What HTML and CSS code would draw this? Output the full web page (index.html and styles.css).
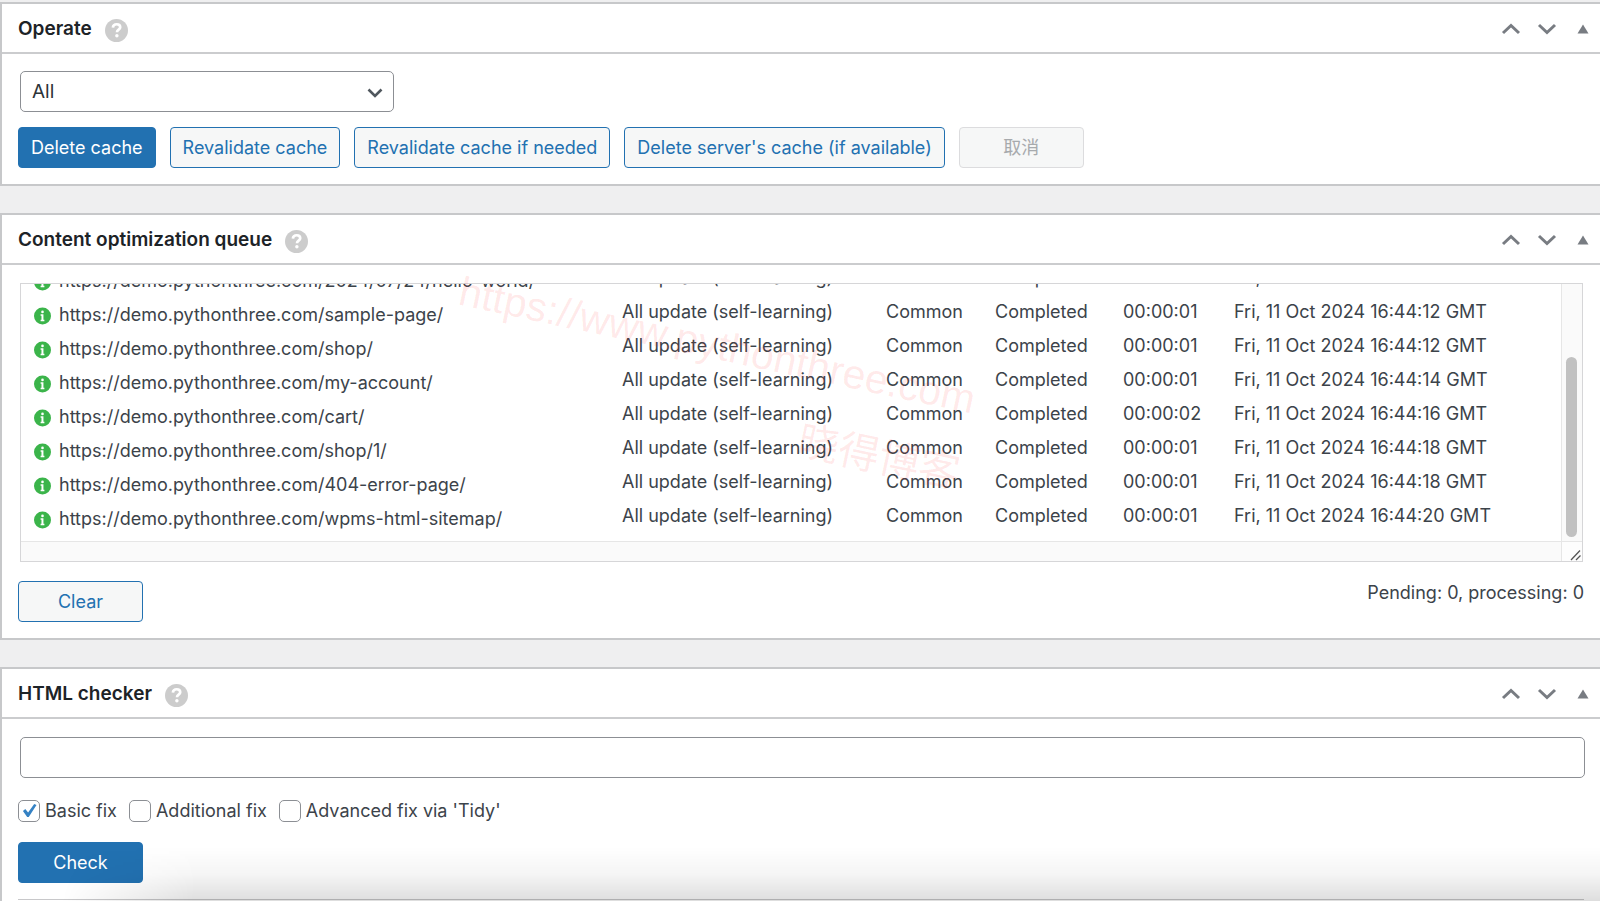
FILE: index.html
```html
<!DOCTYPE html>
<html lang="en">
<head>
<meta charset="utf-8">
<title>Cache settings</title>
<link rel="stylesheet" href="styles.css">
</head>
<body>
<svg class="sprite" aria-hidden="true">
  <symbol id="help" viewBox="0 0 24 24"><circle cx="12" cy="12" r="12" fill="#ccc"/><path d="M8.2 9c.2-2.200 1.700-3.500 4-3.500 2.200 0 3.700 1.200 3.700 3.100 0 2.500-3.400 2.600-3.400 5.200" fill="none" stroke="#fff" stroke-width="2.800"/><circle cx="12.400" cy="17.500" r="1.800" fill="#fff"/></symbol>
  <symbol id="up" viewBox="0 0 20 12"><path d="M2 10l8-7.500L18 10" fill="none" stroke="#787c82" stroke-width="3"/></symbol>
  <symbol id="down" viewBox="0 0 20 12"><path d="M2 2l8 7.500L18 2" fill="none" stroke="#787c82" stroke-width="3"/></symbol>
  <symbol id="tri" viewBox="0 0 12 10"><path d="M6 0.500L11.500 9.500H0.500z" fill="#787c82"/></symbol>
  <symbol id="info" viewBox="0 0 18 18"><circle cx="9" cy="9" r="9" fill="#3bb44a"/><circle cx="9" cy="4.700" r="1.400" fill="#fff"/><path d="M7 7.200h3v5.800h1v1.500H7v-1.500h.9V8.700H7z" fill="#fff"/></symbol>
</svg>

<main class="page">
  <section class="panel">
    <header class="panel-head">
      <h2>Operate</h2><svg class="help" role="img" aria-label="Help"><use href="#help"/></svg>
      <div class="tools">
        <button aria-label="Move up"><svg class="chev"><use href="#up"/></svg></button>
        <button aria-label="Move down"><svg class="chev"><use href="#down"/></svg></button>
        <button aria-label="Toggle panel"><svg class="tri"><use href="#tri"/></svg></button>
      </div>
    </header>
    <div class="panel-body">
      <div class="select-wrap">
        <select class="field" aria-label="Cache type"><option>All</option></select>
        <svg class="select-arrow" viewBox="0 0 16 10" aria-hidden="true"><path d="M1.500 1.500L8 8l6.500-6.500" fill="none" stroke="#50575e" stroke-width="2.600"/></svg>
      </div>
      <div class="buttons">
        <button class="btn primary">Delete cache</button>
        <button class="btn">Revalidate cache</button>
        <button class="btn">Revalidate cache if needed</button>
        <button class="btn">Delete server's cache (if available)</button>
        <button class="btn wide" disabled>取消</button>
      </div>
    </div>
  </section>

  <section class="panel">
    <header class="panel-head">
      <h2>Content optimization queue</h2><svg class="help" role="img" aria-label="Help"><use href="#help"/></svg>
      <div class="tools">
        <button aria-label="Move up"><svg class="chev"><use href="#up"/></svg></button>
        <button aria-label="Move down"><svg class="chev"><use href="#down"/></svg></button>
        <button aria-label="Toggle panel"><svg class="tri"><use href="#tri"/></svg></button>
      </div>
    </header>
    <div class="panel-body">
      <div class="queue">
        <div class="queue-view">
          <table aria-label="Queue">
            <colgroup><col class="c-url"><col class="c-type"><col class="c-group"><col class="c-state"><col class="c-time"><col></colgroup>
            <tbody>
            <tr><td><div class="url"><svg><use href="#info"/></svg>https://demo.pythonthree.com/2024/07/24/hello-world/</div></td><td>All update (self-learning)</td><td>Common</td><td>Completed</td><td>00:00:01</td><td>Fri, 11 Oct 2024 16:44:12 GMT</td></tr>
            <tr><td><div class="url"><svg><use href="#info"/></svg>https://demo.pythonthree.com/sample-page/</div></td><td>All update (self-learning)</td><td>Common</td><td>Completed</td><td>00:00:01</td><td>Fri, 11 Oct 2024 16:44:12 GMT</td></tr>
            <tr><td><div class="url"><svg><use href="#info"/></svg>https://demo.pythonthree.com/shop/</div></td><td>All update (self-learning)</td><td>Common</td><td>Completed</td><td>00:00:01</td><td>Fri, 11 Oct 2024 16:44:12 GMT</td></tr>
            <tr><td><div class="url"><svg><use href="#info"/></svg>https://demo.pythonthree.com/my-account/</div></td><td>All update (self-learning)</td><td>Common</td><td>Completed</td><td>00:00:01</td><td>Fri, 11 Oct 2024 16:44:14 GMT</td></tr>
            <tr><td><div class="url"><svg><use href="#info"/></svg>https://demo.pythonthree.com/cart/</div></td><td>All update (self-learning)</td><td>Common</td><td>Completed</td><td>00:00:02</td><td>Fri, 11 Oct 2024 16:44:16 GMT</td></tr>
            <tr><td><div class="url"><svg><use href="#info"/></svg>https://demo.pythonthree.com/shop/1/</div></td><td>All update (self-learning)</td><td>Common</td><td>Completed</td><td>00:00:01</td><td>Fri, 11 Oct 2024 16:44:18 GMT</td></tr>
            <tr><td><div class="url"><svg><use href="#info"/></svg>https://demo.pythonthree.com/404-error-page/</div></td><td>All update (self-learning)</td><td>Common</td><td>Completed</td><td>00:00:01</td><td>Fri, 11 Oct 2024 16:44:18 GMT</td></tr>
            <tr><td><div class="url"><svg><use href="#info"/></svg>https://demo.pythonthree.com/wpms-html-sitemap/</div></td><td>All update (self-learning)</td><td>Common</td><td>Completed</td><td>00:00:01</td><td>Fri, 11 Oct 2024 16:44:20 GMT</td></tr>
            </tbody>
          </table>
        </div>
        <div class="track-v"><div class="thumb"></div></div>
        <div class="track-h"></div>
        <div class="corner"><svg viewBox="0 0 12 12"><path d="M1 11L10 1.500M6 11l4.500-4.500" fill="none" stroke="#555" stroke-width="1.300"/></svg></div>
      </div>
      <div class="queue-foot">
        <button class="btn wide">Clear</button>
        <span>Pending: 0, processing: 0</span>
      </div>
    </div>
    <div class="watermark" aria-hidden="true"><div>https://www.pythonthree.com</div><div class="sub">晓得博客</div></div>
  </section>

  <section class="panel last">
    <header class="panel-head">
      <h2>HTML checker</h2><svg class="help" role="img" aria-label="Help"><use href="#help"/></svg>
      <div class="tools">
        <button aria-label="Move up"><svg class="chev"><use href="#up"/></svg></button>
        <button aria-label="Move down"><svg class="chev"><use href="#down"/></svg></button>
        <button aria-label="Toggle panel"><svg class="tri"><use href="#tri"/></svg></button>
      </div>
    </header>
    <div class="panel-body">
      <input class="field address" type="text" aria-label="Page address">
      <div class="checks">
        <label><span class="box"><input type="checkbox" checked><svg viewBox="0 0 16 16" aria-hidden="true"><path d="M1 8.500l2.500-2 3 3.500L13 1l2.500 1.200L7.200 15H5.500z" fill="#3582c4"/></svg></span>Basic fix</label>
        <label><span class="box"><input type="checkbox"></span>Additional fix</label>
        <label><span class="box"><input type="checkbox"></span>Advanced fix via 'Tidy'</label>
      </div>
      <button class="btn primary wide">Check</button>
      <hr>
    </div>
  </section>
</main>
<div class="shade"></div>
</body>
</html>
```
FILE: styles.css
```css
* { box-sizing: border-box; }
body {
  margin: 0;
  height: 100vh;
  overflow: hidden;
  background: #efeff0;
  color: #3c434a;
  font: 18px/24px Inter, "Noto Sans CJK SC", sans-serif;
}
button, input, select { font: inherit; }
.sprite { position: absolute; width: 0; height: 0; }
.page {
  display: flex;
  flex-direction: column;
  gap: 27px;
  height: 100vh;
  padding-top: 2px;
}
.panel {
  position: relative;
  flex: none;
  background: #fff;
  border: 2px solid #c7c8ca;
  border-right: 0;
}
.last { flex: 1 0 auto; border-bottom: 0; }
.panel-head {
  display: flex;
  align-items: center;
  height: 50px;
  padding: 2px 11px 0 16px;
  border-bottom: 2px solid #cbccce;
}
h2 {
  margin: 0;
  color: #1d2327;
  font-size: 19px;
  font-weight: 600;
  line-height: 24px;
}
.help { width: 23px; height: 23px; margin: 2px 0 0 13px; }
.tools { display: flex; align-items: center; margin-left: auto; }
.tools button {
  display: flex;
  justify-content: center;
  width: 36px;
  padding: 0;
  border: 0;
  background: none;
}
.tools button:last-child { width: 12px; margin-left: 12px; }
.chev { width: 20px; height: 12px; }
.tri { width: 12px; height: 10px; }
.panel-body { padding: 17px 16px 16px; }
.last .panel-body { padding-top: 18px; }

.field {
  display: block;
  height: 41px;
  padding: 0 11px;
  border: 1px solid #8c8f94;
  border-radius: 5px;
  background: #fff;
  color: #2c3338;
  font-size: 19px;
}
.select-wrap { position: relative; width: 374px; margin-left: 2px; }
.select-wrap .field { width: 100%; appearance: none; }
.select-arrow {
  position: absolute;
  right: 11px;
  top: 17px;
  width: 16px;
  height: 10px;
  pointer-events: none;
}
.buttons { display: flex; gap: 14px; margin-top: 15px; }
.btn {
  display: block;
  height: 41px;
  padding: 0 12px;
  border: 1px solid #2271b1;
  border-radius: 4px;
  background: #f6f7f7;
  color: #2271b1;
  white-space: nowrap;
}
.wide { width: 125px; }
.primary { background: #2271b1; color: #fff; }
.btn:disabled { border-color: #dcdcde; color: #a7aaad; }

.queue {
  display: grid;
  grid-template: 257px 20px / 1fr 21px;
  margin: 1px 1px 0 2px;
  border: 1px solid #d6d6d8;
}
.queue-view {
  display: flex;
  flex-direction: column;
  justify-content: flex-end;
  overflow: hidden;
  padding: 0 0 8px 13px;
}
table {
  flex: none;
  width: 100%;
  table-layout: fixed;
  border-collapse: collapse;
}
tr { height: 34px; }
td { padding: 0; line-height: 24px; vertical-align: middle; white-space: nowrap; }
.c-url { width: 588px; }
.c-type { width: 264px; }
.c-group { width: 109px; }
.c-state { width: 128px; }
.c-time { width: 111px; }
.url { display: flex; align-items: center; gap: 8px; padding-top: 6px; }
.url svg { width: 17px; height: 18px; margin-top: 2px; }
.track-v { padding: 73px 4px 4px; border-left: 1px solid #e6e6e6; background: #fafafa; }
.thumb { width: 11px; height: 180px; border-radius: 6px; background: #c1c1c1; }
.track-h { border-top: 1px solid #e6e6e6; background: #fafafa; }
.corner {
  display: flex;
  align-items: flex-end;
  justify-content: flex-end;
  border: solid #e6e6e6;
  border-width: 1px 0 0 1px;
  background: #fdfdfd;
}
.corner svg { width: 12px; height: 12px; }
.queue-foot { display: flex; justify-content: space-between; margin-top: 19px; }

.watermark {
  position: absolute;
  left: 463px;
  top: 52px;
  color: rgba(255, 40, 40, 0.1);
  font: 41px/48px "Liberation Sans", "Noto Sans CJK SC", sans-serif;
  transform: rotate(12deg);
  transform-origin: 0 0;
  pointer-events: none;
  white-space: nowrap;
}
.sub { margin-top: 28px; text-align: right; }

.address { width: calc(100% - 1px); margin-left: 2px; }
.checks { display: flex; gap: 12px; margin: 21px 0 19px; }
.checks label { display: flex; align-items: center; gap: 5px; }
.box { position: relative; display: flex; }
.box input {
  width: 22px;
  height: 22px;
  margin: 0;
  appearance: none;
  border: 1px solid #8c8f94;
  border-radius: 5px;
  background: #fff;
}
.box svg { position: absolute; left: 4px; top: 3px; width: 15px; height: 15px; }
hr { margin: 16px 0 0; border: 0; border-top: 1px solid #c8c8ca; }
.shade {
  position: absolute;
  left: 0;
  right: 0;
  bottom: 0;
  height: 54px;
  background: linear-gradient(rgba(0, 0, 0, 0), rgba(0, 0, 0, 0.04) 50%, rgba(0, 0, 0, 0.13));
  mask-image: linear-gradient(100deg, transparent 70px, #000 200px);
  pointer-events: none;
}
```
